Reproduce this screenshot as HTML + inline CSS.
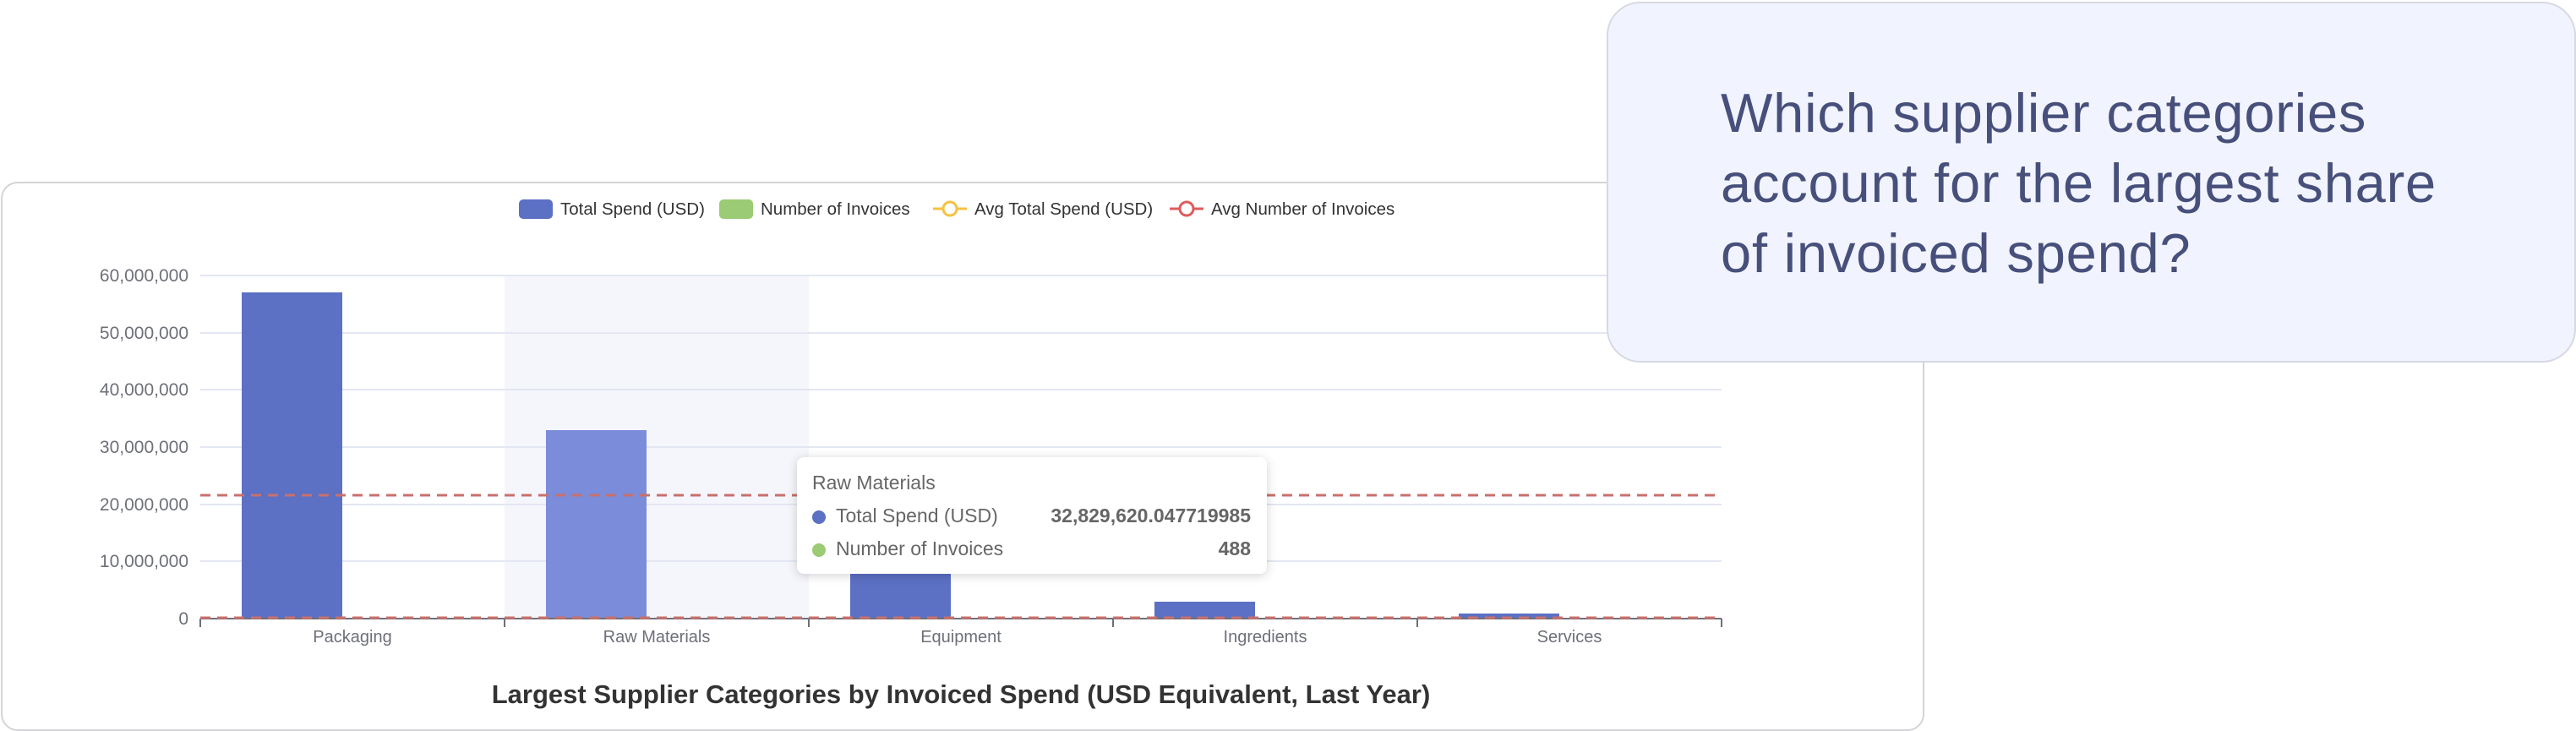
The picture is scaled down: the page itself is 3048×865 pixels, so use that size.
<!DOCTYPE html>
<html><head><meta charset="utf-8"><style>
html,body{margin:0;padding:0;width:3048px;height:865px;background:#fff;overflow:hidden;font-family:"Liberation Sans",sans-serif}
.card{position:absolute;left:1px;top:215px;width:2272px;height:646px;border:2px solid #d4d4d8;border-radius:20px;background:#fff}
.q{position:absolute;left:1901px;top:2px;width:1143px;height:423px;border:2px solid #d6d8e2;border-radius:40px;background:#f1f4fe}
.qt{position:absolute;left:2036px;top:92px;font-size:65px;line-height:83px;color:#474f7b;letter-spacing:0.8px}
.tip{position:absolute;left:943px;top:541px;width:556px;height:138px;background:#fff;border-radius:8px;box-shadow:0 2px 12px rgba(0,0,0,0.18);font-size:23px;color:#666}
</style></head><body>
<div class="card"></div>
<svg style="position:absolute;left:0;top:0" width="2280" height="865">
 <g font-family="Liberation Sans" font-size="20.5" fill="#333">
  <rect x="614" y="236" width="40" height="23" rx="5" fill="#5c70c4"/>
  <text x="663" y="254">Total Spend (USD)</text>
  <rect x="851" y="236" width="40" height="23" rx="5" fill="#9bcb74"/>
  <text x="900" y="254">Number of Invoices</text>
  <line x1="1104" y1="247" x2="1144" y2="247" stroke="#f5c242" stroke-width="3"/>
  <circle cx="1124" cy="247" r="8" fill="#fff" stroke="#f5c242" stroke-width="3"/>
  <text x="1153" y="254">Avg Total Spend (USD)</text>
  <line x1="1384" y1="247" x2="1424" y2="247" stroke="#dd5c5c" stroke-width="3"/>
  <circle cx="1404" cy="247" r="8" fill="#fff" stroke="#dd5c5c" stroke-width="3"/>
  <text x="1433" y="254">Avg Number of Invoices</text>
 </g>
 <rect x="597" y="326" width="360" height="406" fill="#f5f6fb"/>
 <g stroke="#e3e7f2" stroke-width="2">
  <line x1="237" x2="2037" y1="326" y2="326"/><line x1="237" x2="2037" y1="394" y2="394"/>
  <line x1="237" x2="2037" y1="461" y2="461"/><line x1="237" x2="2037" y1="529" y2="529"/>
  <line x1="237" x2="2037" y1="597" y2="597"/><line x1="237" x2="2037" y1="664" y2="664"/>
 </g>
 <g font-family="Liberation Sans" font-size="21" fill="#6e7079" text-anchor="end">
  <text x="223" y="333">60,000,000</text><text x="223" y="401">50,000,000</text>
  <text x="223" y="468">40,000,000</text><text x="223" y="536">30,000,000</text>
  <text x="223" y="604">20,000,000</text><text x="223" y="671">10,000,000</text>
  <text x="223" y="739">0</text>
 </g>
 <rect x="286" y="346" width="119" height="386" fill="#5c70c4"/>
 <rect x="646" y="509" width="119" height="223" fill="#7b8cda"/>
 <rect x="1006" y="664" width="119" height="68" fill="#5c70c4"/>
 <rect x="1366" y="712" width="119" height="20" fill="#5c70c4"/>
 <rect x="1726" y="726" width="119" height="6" fill="#5c70c4"/>
 <line x1="237" x2="2037" y1="732" y2="732" stroke="#6e7079" stroke-width="2"/>
 <g stroke="#6e7079" stroke-width="2">
  <line x1="237" x2="237" y1="732" y2="742"/><line x1="597" x2="597" y1="732" y2="742"/>
  <line x1="957" x2="957" y1="732" y2="742"/><line x1="1317" x2="1317" y1="732" y2="742"/>
  <line x1="1677" x2="1677" y1="732" y2="742"/><line x1="2037" x2="2037" y1="732" y2="742"/>
 </g>
 <line x1="237" x2="2037" y1="586" y2="586" stroke="#c9706c" stroke-width="3" stroke-dasharray="12 8"/>
 <line x1="237" x2="2037" y1="731" y2="731" stroke="#c9706c" stroke-width="3" stroke-dasharray="12 8"/>
 <g font-family="Liberation Sans" font-size="20" fill="#6e7079" text-anchor="middle">
  <text x="417" y="760">Packaging</text><text x="777" y="760">Raw Materials</text>
  <text x="1137" y="760">Equipment</text><text x="1497" y="760">Ingredients</text>
  <text x="1857" y="760">Services</text>
 </g>
 <text x="1137" y="832" text-anchor="middle" font-family="Liberation Sans" font-size="31" font-weight="bold" fill="#333">Largest Supplier Categories by Invoiced Spend (USD Equivalent, Last Year)</text>
</svg>
<div class="tip">
 <div style="position:absolute;left:18px;top:17px">Raw Materials</div>
 <div style="position:absolute;left:18px;top:63px;width:16px;height:16px;border-radius:50%;background:#5c70c4"></div>
 <div style="position:absolute;left:46px;top:56px">Total Spend (USD)</div>
 <div style="position:absolute;right:19px;top:56px;font-weight:bold">32,829,620.047719985</div>
 <div style="position:absolute;left:18px;top:102px;width:16px;height:16px;border-radius:50%;background:#9bcb74"></div>
 <div style="position:absolute;left:46px;top:95px">Number of Invoices</div>
 <div style="position:absolute;right:19px;top:95px;font-weight:bold">488</div>
</div>
<div class="q"></div>
<div class="qt">Which supplier categories<br>account for the largest share<br>of invoiced spend?</div>
</body></html>
